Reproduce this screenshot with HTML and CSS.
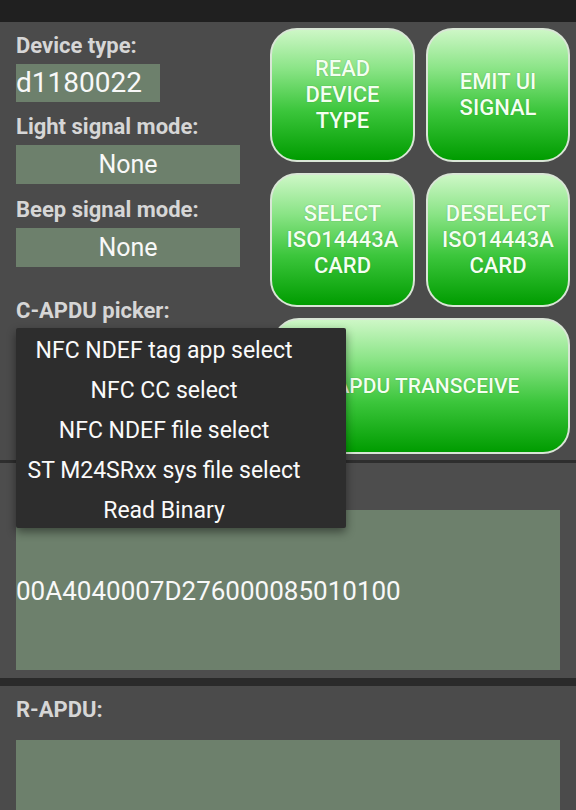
FILE: index.html
```html
<!DOCTYPE html>
<html>
<head>
<meta charset="utf-8">
<link rel="stylesheet" href="styles.css">
</head>
<body>
<div class="statusbar"></div>
<div class="top">
  <div class="left">
    <div class="label">Device type:</div>
    <div class="value short">d1180022</div>
    <div class="label">Light signal mode:</div>
    <div class="value spin">None</div>
    <div class="label">Beep signal mode:</div>
    <div class="value spin">None</div>
    <div class="label picker">C-APDU picker:</div>
  </div>
  <div class="buttons">
    <div class="btn">READ<br>DEVICE<br>TYPE</div>
    <div class="btn">EMIT UI<br>SIGNAL</div>
    <div class="btn">SELECT<br>ISO14443A<br>CARD</div>
    <div class="btn">DESELECT<br>ISO14443A<br>CARD</div>
    <div class="btn wide">C-APDU TRANSCEIVE</div>
  </div>
</div>
<div class="sep"></div>
<div class="section capdu">
  <div class="field big">00A4040007D276000085010100</div>
</div>
<div class="sep2"></div>
<div class="section rapdu">
  <div class="label sec-label">R-APDU:</div>
  <div class="field low"></div>
</div>
<div class="popup">
  <div class="item">NFC NDEF tag app select</div>
  <div class="item">NFC CC select</div>
  <div class="item">NFC NDEF file select</div>
  <div class="item">ST M24SRxx sys file select</div>
  <div class="item">Read Binary</div>
</div>
</body>
</html>
```

FILE: styles.css
```css
html, body {
  margin: 0;
  padding: 0;
}
body {
  width: 576px;
  height: 810px;
  overflow: hidden;
  background: #4b4b4b;
  font-family: Roboto, "Liberation Sans", sans-serif;
  position: relative;
}
.statusbar {
  height: 22px;
  background: #202020;
}
.top {
  display: grid;
  grid-template-columns: 224px 295px;
  column-gap: 30px;
  padding: 0 6px 0 16px;
  height: 438px;
}
.left {
  display: flex;
  flex-direction: column;
  align-items: flex-start;
  padding-top: 11px;
}
.label {
  font-size: 22px;
  font-weight: 700;
  color: #d6d6d6;
  line-height: 26px;
  height: 26px;
  margin-bottom: 5px;
  white-space: nowrap;
}
.value {
  background: #6d806c;
  color: #f8f8f8;
  height: 38px;
  line-height: 38px;
  margin-bottom: 12px;
}
.value.short {
  width: 144px;
  font-size: 28px;
}
.value.spin {
  width: 224px;
  text-align: center;
  font-size: 25px;
  height: 39px;
  line-height: 39px;
  margin-bottom: 13px;
}
.label.picker {
  margin-top: 18px;
}
.buttons {
  display: grid;
  grid-template-columns: 145px 144px;
  grid-template-rows: 134px 134px 136px;
  gap: 11px;
  padding-top: 6px;
}
.btn {
  box-sizing: border-box;
  border: 2px solid #d9e6d6;
  border-radius: 27px;
  background: linear-gradient(to bottom, #cdf7c6 0%, #8ae486 30%, #3cc63c 62%, #009c00 100%);
  color: #f3fff0;
  font-size: 22px;
  font-weight: 500;
  line-height: 26px;
  text-align: center;
  display: flex;
  align-items: center;
  justify-content: center;
  text-shadow: 0 0 1px rgba(0, 80, 0, 0.5);
}
.btn.wide {
  grid-column: 1 / 3;
  margin-left: 2px;
  font-size: 21px;
  padding-right: 8px;
}
.sep {
  height: 3px;
  background: #2e2e2e;
}
.section {
  padding: 0 16px;
}
.capdu {
  padding-top: 47px;
  padding-bottom: 8px;
  background: #4d4d4d;
}
.field {
  background: #6d806c;
  color: #f8f8f8;
}
.field.big {
  height: 160px;
  display: flex;
  align-items: center;
  padding-top: 2px;
  box-sizing: border-box;
  font-size: 26px;
}
.sep2 {
  height: 8px;
  background: #2a2a2a;
}
.sec-label {
  margin: 11px 0 17px;
}
.field.low {
  height: 120px;
}
.popup {
  position: absolute;
  left: 16px;
  top: 328px;
  width: 330px;
  box-sizing: border-box;
  padding: 3px 34px 0 0;
  height: 200px;
  background: #2d2d2d;
  border-radius: 2px;
  box-shadow: 0 4px 10px rgba(0, 0, 0, 0.45);
}
.item {
  height: 40px;
  line-height: 40px;
  text-align: center;
  color: #fafafa;
  font-size: 23px;
  white-space: nowrap;
}
```
